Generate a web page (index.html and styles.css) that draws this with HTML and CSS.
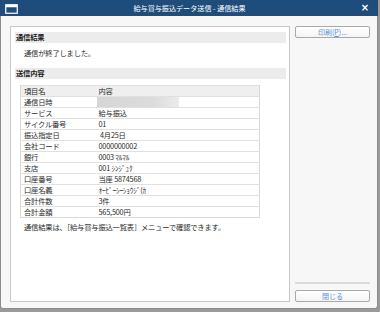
FILE: index.html
```html
<!DOCTYPE html>
<html lang="ja">
<head>
    <meta charset="UTF-8">
    <title>給与賞与振込データ送信 - 通信結果</title>
    <link rel="stylesheet" href="styles.css">
</head>
<body>
    <div class="window">
        <div class="titlebar">
            <svg class="app-icon" width="13" height="10" viewBox="0 0 13 10">
                <rect x="0.75" y="0.75" width="11.5" height="8.5" fill="none" stroke="#fff" stroke-width="1.2"/>
                <rect x="0.75" y="0.75" width="11.5" height="2.5" fill="#fff"/>
            </svg>
            <div class="title">給与賞与振込データ送信 - 通信結果</div>
            <div class="close-x">×</div>
        </div>

        <div class="content">
            <div class="panel">
                <div class="section-head">通信結果</div>
                <div class="message">通信が終了しました。</div>

                <div class="section-head">送信内容</div>
                <table class="detail">
                    <tr class="head"><td class="col-name">項目名</td><td>内容</td></tr>
                    <tr><td>通信日時</td><td><div class="blurred"></div></td></tr>
                    <tr><td>サービス</td><td>給与振込</td></tr>
                    <tr><td>サイクル番号</td><td>01</td></tr>
                    <tr><td>振込指定日</td><td>&nbsp;4月25日</td></tr>
                    <tr><td>会社コード</td><td>0000000002</td></tr>
                    <tr><td>銀行</td><td>0003 ﾏﾙﾏﾙ</td></tr>
                    <tr><td>支店</td><td>001 ｼﾝｼﾞｭｸ</td></tr>
                    <tr><td>口座番号</td><td>当座 5874568</td></tr>
                    <tr><td>口座名義</td><td>ｵｰﾋﾞｰｼｰｼｮｳｼﾞ(ｶ</td></tr>
                    <tr><td>合計件数</td><td>3件</td></tr>
                    <tr><td>合計金額</td><td>565,500円</td></tr>
                </table>

                <div class="note">通信結果は、［給与賞与振込一覧表］メニューで確認できます。</div>
            </div>

            <div class="side">
                <button class="btn">印刷(<u>P</u>)...</button>
                <div class="spacer"></div>
                <div class="separator"></div>
                <button class="btn">閉じる</button>
            </div>
        </div>
    </div>
</body>
</html>
```

FILE: styles.css
```css
body {
    margin: 0;
    background-color: #9a9a9a;
    font-family: "Noto Sans CJK JP", "Noto Sans", sans-serif;
    font-size: 7.3px;
    color: #2b2b2b;
    width: 380px;
    height: 312px;
    overflow: hidden;
}
.window {
    width: 378px;
    height: 309px;
    box-sizing: border-box;
    background-color: #f7f7f7;
    border: 1px solid #8c8c8c;
    border-top: none;
    border-radius: 0 0 3px 3px;
    display: flex;
    flex-direction: column;
}
.titlebar {
    height: 17px;
    margin: 0 -1px 0 -1px;
    background-color: #1e4d7b;
    display: flex;
    align-items: center;
    color: #fff;
}
.app-icon {
    margin-left: 5px;
    margin-top: 1px;
}
.title {
    flex: 1;
    text-align: center;
    font-size: 7.1px;
    padding-left: 2px;
}
.close-x {
    width: 12px;
    margin-right: 7px;
    font-size: 10px;
    font-weight: bold;
    font-family: "DejaVu Sans", sans-serif;
    text-align: center;
    line-height: 10px;
}
.content {
    flex: 1;
    display: flex;
    padding: 10px 0 6px 9px;
    gap: 5px;
}
.panel {
    width: 280px;
    height: 276px;
    box-sizing: border-box;
    background-color: #fff;
    border: 1px solid #c8c8c8;
    padding: 5px 3px 0 4px;
    letter-spacing: -0.2px;
}
.section-head {
    height: 11px;
    line-height: 11px;
    background-color: #ececec;
    font-weight: bold;
    padding-left: 1px;
    color: #222;
}
.message {
    height: 25px;
    line-height: 11px;
    padding: 5px 0 0 9px;
    box-sizing: border-box;
}
.detail {
    margin: 6px 0 0 5px;
    width: 240px;
    border-collapse: collapse;
    border: 1px solid #d8d8d8;
}
.detail td {
    height: 11px;
    line-height: 10px;
    padding: 0 0 0 3px;
    border-top: 1px solid #e0e0e0;
    box-sizing: border-box;
    white-space: nowrap;
    vertical-align: middle;
}
.detail .col-name {
    width: 75px;
}
.detail tr.head td {
    background-color: #efefef;
}
.blurred {
    width: 82px;
    height: 10px;
    margin-left: -2px;
    background: linear-gradient(to right, #d6d6d6, #dcdcdc 70%, #ececec);
    filter: blur(0.6px);
}
.note {
    margin: 4px 0 0 9px;
    line-height: 11px;
}
.side {
    width: 75px;
    display: flex;
    flex-direction: column;
}
.btn {
    height: 12px;
    padding: 0;
    background: linear-gradient(#ffffff, #f4f4f4);
    border: 1px solid #a9a9a9;
    border-radius: 2px;
    color: #5b8fe0;
    font-family: "Noto Sans CJK JP", "Noto Sans", sans-serif;
    font-size: 7px;
    line-height: 10px;
}
.spacer {
    flex: 1;
}
.separator {
    height: 2px;
    background-color: #dcdcdc;
    margin-bottom: 6px;
}
```
